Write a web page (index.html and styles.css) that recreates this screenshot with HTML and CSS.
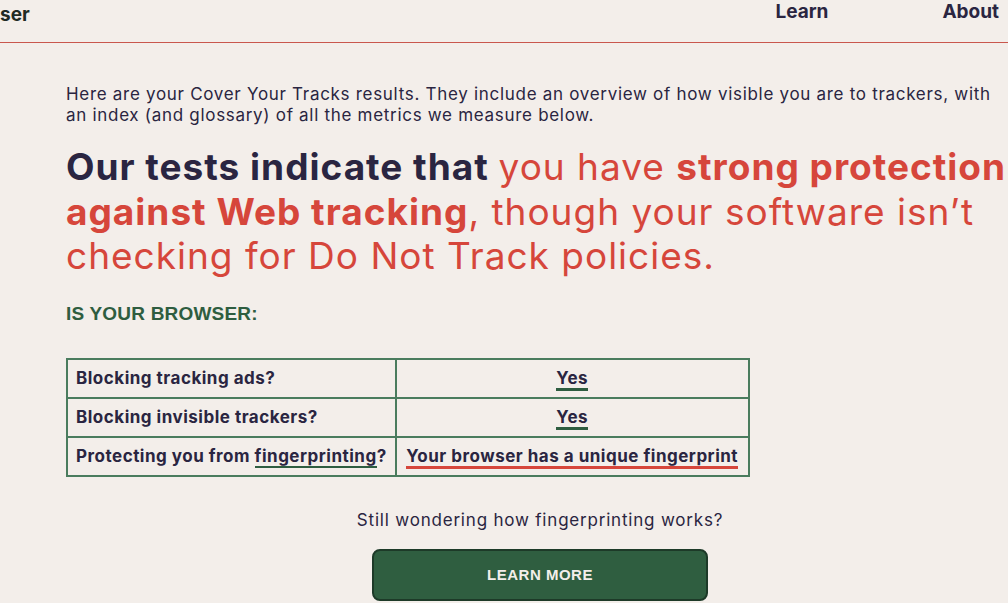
FILE: index.html
```html
<!DOCTYPE html>
<html lang="en">
<head>
    <meta charset="UTF-8">
    <meta name="viewport" content="width=device-width, initial-scale=1.0">
    <title>Cover Your Tracks</title>
    <link rel="stylesheet" href="styles.css">
</head>
<body>

    <header class="topbar">
        <span class="brand">ser</span>
        <nav class="nav">
            <a href="#" class="nav-link">Learn</a>
            <a href="#" class="nav-link">About</a>
        </nav>
    </header>

    <main class="results">
        <p class="intro">Here are your Cover Your Tracks results. They include an overview of how visible you are to trackers, with an index (and glossary) of all the metrics we measure below.</p>

        <h1 class="verdict">Our tests indicate that <span class="red">you have <b>strong protection against Web tracking</b>, though your software isn’t checking for Do Not Track policies.</span></h1>

        <h3 class="section-label">IS YOUR BROWSER:</h3>

        <table class="summary">
            <tr>
                <td>Blocking tracking ads?</td>
                <td class="answer"><span class="yes">Yes</span></td>
            </tr>
            <tr>
                <td>Blocking invisible trackers?</td>
                <td class="answer"><span class="yes">Yes</span></td>
            </tr>
            <tr>
                <td>Protecting you from <a href="#" class="term">fingerprinting</a>?</td>
                <td class="answer"><span class="no">Your browser has a unique fingerprint</span></td>
            </tr>
        </table>

        <p class="still">Still wondering how fingerprinting works?</p>
        <button class="learn-btn">LEARN MORE</button>
    </main>

</body>
</html>
```

FILE: styles.css
```css
body {
    background-color: #f3eeea;
    font-family: Inter, "Open Sans", sans-serif;
    color: #2a2541;
    margin: 0;
    overflow: hidden;
}

.topbar {
    display: flex;
    justify-content: space-between;
    align-items: flex-start;
    height: 42px;
    border-bottom: 1px solid #c9574d;
}

.brand {
    font-size: 19px;
    font-weight: 700;
    color: #1f2b24;
    margin-top: 3px;
}

.nav {
    display: flex;
    gap: 114px;
    margin-right: 9px;
}

.nav-link {
    font-size: 19px;
    font-weight: 700;
    color: #2a2541;
    text-decoration: none;
}

.results {
    margin-left: 66px;
    width: 948px;
    display: flex;
    flex-direction: column;
    align-items: flex-start;
}

.intro {
    max-width: 932px;
    font-size: 17px;
    line-height: 21px;
    letter-spacing: 0.7px;
    margin: 41px 0 0;
}

.verdict {
    font-size: 37px;
    line-height: 44.5px;
    font-weight: 700;
    letter-spacing: 1px;
    margin: 19px 0 0;
}

.red {
    color: #d6463b;
    font-weight: 400;
}

.red b {
    font-weight: 700;
}

.section-label {
    font-family: "Liberation Sans", Arial, sans-serif;
    font-size: 19px;
    color: #2e5d40;
    letter-spacing: 0.2px;
    margin: 24px 0 0;
}

.summary {
    border-collapse: collapse;
    margin-top: 33px;
    border: 2px solid #4a7c5e;
}

.summary td {
    border: 2px solid #4a7c5e;
    font-size: 17px;
    font-weight: 700;
    letter-spacing: 0.5px;
    height: 37px;
    padding: 0 8px;
}

.summary .answer {
    text-align: center;
    width: 335px;
}

.yes {
    border-bottom: 3px solid #2e5d40;
}

.no {
    border-bottom: 3px solid #d6463b;
}

.term {
    color: #2a2541;
    text-decoration: none;
    border-bottom: 2px solid #2e5d40;
}

.still {
    align-self: center;
    font-size: 17px;
    letter-spacing: 0.8px;
    margin: 33px 0 0;
}

.learn-btn {
    align-self: center;
    margin-top: 19px;
    width: 336px;
    height: 52px;
    background-color: #2f5e40;
    border: 2px solid #1d3a28;
    border-radius: 8px;
    color: #f3eeea;
    font-family: "Liberation Sans", Arial, sans-serif;
    font-size: 15px;
    font-weight: 700;
    letter-spacing: 0.5px;
}
```
